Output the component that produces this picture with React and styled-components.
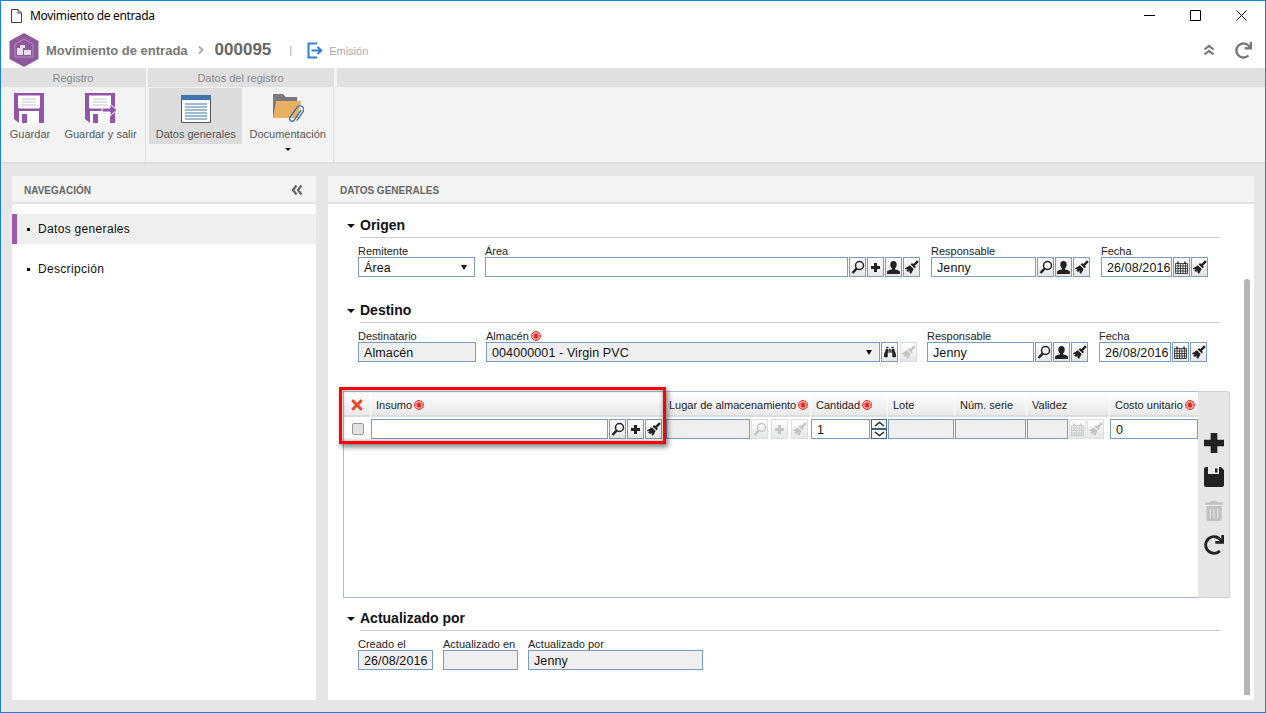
import React from "react";
import styled, { createGlobalStyle } from "styled-components";
import { FaBinoculars, FaRedo, FaTimes, FaTrashAlt } from "react-icons/fa";

const GlobalStyle = createGlobalStyle`
  html, body {
    margin: 0;
    padding: 0;
    background: #fff;
  }
  * {
    box-sizing: border-box;
  }
  body {
    font-family: "Liberation Sans", Arial, sans-serif;
    color: #111;
  }
`;

const Window = styled.div`
  width: 1266px;
  height: 713px;
  border: 1px solid #1883d7;
  display: flex;
  flex-direction: column;
  overflow: hidden;
  background: #e6e6e6;
`;

const TitleBar = styled.div`
  height: 29px;
  flex: none;
  background: #fff;
  display: flex;
  align-items: center;
  padding-left: 10px;
`;

const TitleText = styled.span`
  font-family: "Noto Sans", sans-serif;
  font-size: 12px;
  letter-spacing: -0.33px;
  color: #000;
  margin-left: 8px;
  flex: 1;
`;

const WinButton = styled.div`
  width: 46px;
  display: flex;
  justify-content: center;
  margin-right: ${(p) => p.$mr || 0}px;
`;

const HeaderBar = styled.div`
  height: 38px;
  flex: none;
  background: #fff;
  display: flex;
  align-items: center;
  padding: 2px 13px 0 8px;
`;

const Crumb = styled.span`
  font-size: 13px;
  font-weight: bold;
  color: #777;
  margin-left: 7px;
`;

const CrumbSep = styled.span`
  display: flex;
  margin: 0 11px 0 10px;
`;

const RecordNo = styled.span`
  font-size: 17px;
  font-weight: bold;
  color: #666;
`;

const Pipe = styled.span`
  margin: 0 15px 0 18px;
  color: #aaa;
  font-size: 11px;
`;

const StepText = styled.span`
  font-size: 11px;
  color: #aaa;
  margin-left: 6px;
  padding-top: 2px;
  flex: 1;
`;

const HeadAction = styled.div`
  color: #777;
  display: flex;
  font-size: 17px;
  margin-left: 20px;
`;

const Ribbon = styled.div`
  height: 96px;
  flex: none;
  display: flex;
  background: #f3f3f3;
  border-bottom: 2px solid #dedede;
`;

const RibbonGroup = styled.div`
  width: ${(p) => p.$w}px;
  flex: ${(p) => (p.$w ? "none" : 1)};
  margin-right: ${(p) => p.$gap || 0}px;
  border-right: ${(p) => (p.$w ? "1px solid #e0e0e0" : "none")};
  display: flex;
  flex-direction: column;
`;

const GroupTitle = styled.div`
  height: 19px;
  background: #e0e0e0;
  font-size: 11px;
  color: #888;
  display: flex;
  align-items: center;
  justify-content: center;
`;

const GroupBody = styled.div`
  display: flex;
  padding: 1px 0 0 ${(p) => p.$pad || 0}px;
`;

const RibbonButton = styled.div`
  width: ${(p) => p.$w}px;
  height: 56px;
  display: flex;
  flex-direction: column;
  align-items: center;
  padding-top: 5px;
  background: ${(p) => (p.$active ? "#dcdcdc" : "transparent")};
  position: relative;
`;

const RibbonLabel = styled.span`
  font-size: 11px;
  color: #555;
  margin-top: 5px;
  white-space: nowrap;
`;

const DropCaret = styled.span`
  position: absolute;
  left: 50%;
  bottom: -7px;
  margin-left: -3px;
  border-left: 3px solid transparent;
  border-right: 3px solid transparent;
  border-top: 3px solid #111;
`;

const Main = styled.div`
  flex: 1;
  min-height: 0;
  display: flex;
  gap: 12px;
  padding: 12px 11px;
`;

const Panel = styled.div`
  width: ${(p) => p.$w}px;
  flex: none;
  background: #fff;
  border-radius: 3px 3px 0 0;
  position: relative;
  display: flex;
  flex-direction: column;
`;

const PanelHead = styled.div`
  height: 28px;
  flex: none;
  background: #f4f4f4;
  border-bottom: 2px solid #e2e2e2;
  border-radius: 3px 3px 0 0;
  display: flex;
  align-items: center;
  justify-content: space-between;
  padding: 2px 13px 0 12px;
  font-size: 10px;
  font-weight: bold;
  color: #666;
`;

const NavList = styled.div`
  padding-top: 10px;
  display: flex;
  flex-direction: column;
  gap: 10px;
`;

const NavItem = styled.div`
  height: 30px;
  display: flex;
  align-items: center;
  padding-left: ${(p) => (p.$active ? 10 : 15)}px;
  border-left: ${(p) => (p.$active ? "5px solid #9a5ab0" : "none")};
  background: ${(p) => (p.$active ? "#efefef" : "transparent")};
  font-size: 12px;
  letter-spacing: 0.32px;
  color: #111;
  &::before {
    content: "";
    width: 3px;
    height: 3px;
    background: #111;
    margin-right: 8px;
  }
`;

const Body = styled.div`
  padding-top: 14px;
`;

const ScrollThumb = styled.div`
  position: absolute;
  right: 4px;
  top: 103px;
  width: 6px;
  height: 416px;
  border-radius: 3px 3px 0 0;
  background: #b5b5b5;
`;

const Section = styled.div`
  padding-left: 19px;
  margin-top: ${(p) => p.$mt || 0}px;
`;

const SectionHead = styled.div`
  display: flex;
  align-items: center;
  gap: 5px;
  margin-right: 34px;
`;

const SectionCaret = styled.span`
  width: 0;
  flex: none;
  border-left: 4px solid transparent;
  border-right: 4px solid transparent;
  border-top: 4px solid #111;
  margin-bottom: 5px;
`;

const SectionTitle = styled.div`
  flex: 1;
  height: 20px;
  font-size: 14px;
  line-height: 15px;
  font-weight: bold;
  color: #111;
  border-bottom: 1px solid #ccc;
`;

const FieldRow = styled.div`
  display: flex;
  padding: 7px 0 0 11px;
`;

const Field = styled.div`
  margin-left: ${(p) => p.$ml || 0}px;
  display: flex;
  flex-direction: column;
`;

const Label = styled.div`
  height: 12px;
  font-size: 11px;
  line-height: 12px;
  color: #222;
  display: flex;
  align-items: center;
  gap: 2px;
  white-space: nowrap;
`;

const Controls = styled.div`
  display: flex;
  gap: ${(p) => p.$gap ?? 1}px;
  width: ${(p) => (p.$w ? `${p.$w}px` : "auto")};
  flex: none;
`;

const Box = styled.div`
  width: ${(p) => p.$w}px;
  height: 20px;
  flex: none;
  border: 1px solid #7c9cbd;
  background: ${(p) => (p.$off ? "#efefef" : "#fff")};
  font-size: 12.5px;
  letter-spacing: 0.1px;
  color: #111;
  display: flex;
  align-items: center;
  justify-content: space-between;
  padding: 1px 5px 0;
  white-space: nowrap;
  overflow: hidden;
`;

const BoxCaret = styled.span`
  border-left: 3px solid transparent;
  border-right: 3px solid transparent;
  border-top: 5px solid #111;
  margin-right: 2px;
`;

const IconButton = styled.div`
  width: 17px;
  height: 20px;
  flex: none;
  border: 1px solid ${(p) => (p.$off ? "#d6dfe9" : "#7c9cbd")};
  background: linear-gradient(#fff, #e6e6e6);
  color: ${(p) => (p.$off ? "#c4c4c4" : "#222")};
  display: flex;
  align-items: center;
  justify-content: center;
  font-size: 12px;
`;

const GridWrap = styled.div`
  margin: 29px 0 0 15px;
  width: 887px;
  height: 207px;
  display: flex;
  position: relative;
`;

const GridMain = styled.div`
  flex: 1;
  border: 1px solid #a3bddb;
  border-right: none;
  background: #fff;
`;

const GridRow = styled.div`
  display: flex;
  gap: 1px;
  height: ${(p) => p.$h}px;
  align-items: ${(p) => (p.$head ? "stretch" : "flex-start")};
  padding-top: ${(p) => p.$pt || 0}px;
`;

const HeadCell = styled.div`
  width: ${(p) => p.$w}px;
  flex: none;
  background: linear-gradient(#fff, #e9e9e9);
  border-bottom: 2px solid #dcdcdc;
  font-size: 11px;
  color: #222;
  display: flex;
  align-items: center;
  gap: 2px;
  padding: 2px 0 0 ${(p) => p.$pad ?? 5}px;
  justify-content: ${(p) => (p.$center ? "center" : "flex-start")};
  white-space: nowrap;
`;

const CheckCell = styled.div`
  width: 26px;
  height: 20px;
  flex: none;
  display: flex;
  align-items: center;
  justify-content: center;
  padding-left: 2px;
`;

const CheckBox = styled.div`
  width: 12px;
  height: 12px;
  border: 1px solid #999;
  border-radius: 2px;
  background: #e2e2e2;
`;

const Spinner = styled.div`
  width: 16px;
  height: 20px;
  flex: none;
  display: flex;
  flex-direction: column;
`;

const SpinPart = styled.div`
  flex: 1;
  border: 1px solid #3f6288;
  background: #fff;
  display: flex;
  align-items: center;
  justify-content: center;
`;

const GridTools = styled.div`
  width: 32px;
  flex: none;
  background: #e6e6e6;
  border: 1px solid #d0d0d0;
  border-left: none;
  border-radius: 0 3px 0 0;
  display: flex;
  flex-direction: column;
  align-items: center;
  padding-top: 41px;
  gap: 14px;
`;

const ToolIcon = styled.div`
  height: 20px;
  display: flex;
  align-items: center;
  font-size: 20px;
  color: ${(p) => (p.$off ? "#c0c0c0" : "#222")};
`;

const Highlight = styled.div`
  position: absolute;
  left: -4px;
  top: -4px;
  width: 327px;
  height: 57px;
  border: 3px solid #f00;
  box-shadow: 2px 3px 5px rgba(0, 0, 0, 0.5), inset 0 0 4px rgba(0, 0, 0, 0.4);
  pointer-events: none;
`;

const Required = () => (
  <svg width="10" height="10" viewBox="0 0 10 10">
    <circle cx="5" cy="5" r="4.5" fill="#fbd5d3" stroke="#e0201c" strokeWidth="0.9" />
    <path d="M2.6 2.6l4.8 4.8M7.4 2.6l-4.8 4.8M5 1.2v7.600M1.2 5h7.600" stroke="#e0201c" strokeWidth="1.1" />
  </svg>
);

const SearchIcon = () => (
  <svg width="14" height="14" viewBox="0 0 14 14">
    <circle cx="8.500" cy="5.500" r="4" fill="none" stroke="currentColor" strokeWidth="1.500" />
    <path d="M5.800 8.400L1.500 13" stroke="currentColor" strokeWidth="2.400" />
  </svg>
);

const UserIcon = () => (
  <svg width="15" height="15" viewBox="0 0 14 14">
    <path
      fill="currentColor"
      d="M7 1c2 0 3 1.400 3 3.300 0 1.500-.6 2.800-1.500 3.400v1c0 .5 4.500.9 4.500 2.300V13H1v-2c0-1.400 4.500-1.800 4.500-2.300v-1C4.600 7.100 4 5.800 4 4.300 4 2.400 5 1 7 1z"
    />
  </svg>
);

const CalendarIcon = () => (
  <svg width="13" height="13" viewBox="0 0 13 13">
    <path
      fill="none"
      stroke="currentColor"
      strokeWidth="0.800"
      d="M.5 2.500h12v10H.5zM.5 5h12M.5 7.500h12M.5 10h12M3 2.500v10M5.500 2.500v10M8 2.500v10M10.500 2.500v10"
    />
    <path d="M3 .5v2.500M10 .5v2.500" stroke="currentColor" strokeWidth="1.400" />
  </svg>
);

const BrushIcon = () => (
  <svg width="15" height="15" viewBox="0 0 14 14">
    <path d="M13 1L9 5" stroke="currentColor" strokeWidth="2.200" />
    <path d="M7.500 2.800l3.700 3.700-1.300 1.300-3.700-3.700z" fill="currentColor" />
    <path fill="currentColor" d="M5.500 5l3.500 3.500L6.500 13 5 11.500l.5-1.500-1.800 1.200L2 9.500l1.500-1-2 .2L.8 8z" />
  </svg>
);

const PlusIcon = ({ size = 9 }) => (
  <svg width={size} height={size} viewBox="0 0 9 9">
    <path d="M4.500 0v9M0 4.500h9" stroke="currentColor" strokeWidth="3" />
  </svg>
);

const FloppyGlyph = () => (
  <svg width="20" height="20" viewBox="0 0 20 20">
    <path
      fill="currentColor"
      fillRule="evenodd"
      d="M2 0h15l3 3v15a2 2 0 0 1-2 2H2a2 2 0 0 1-2-2V2a2 2 0 0 1 2-2zM4 0v7h11V0zM11 1.500h2.500v4H11z"
    />
  </svg>
);

const DoubleChevron = ({ dir }) => (
  <svg width="12" height="12" viewBox="0 0 12 12">
    <path
      fill="none"
      stroke="currentColor"
      strokeWidth="2.200"
      d={
        dir === "up"
          ? "M1.500 5.500L6 2l4.500 3.500M1.500 10.500L6 7l4.500 3.500"
          : "M5.500 1.500L2 6l3.500 4.500M10.500 1.500L7 6l3.500 4.500"
      }
    />
  </svg>
);

const CrumbChevron = () => (
  <svg width="6" height="8" viewBox="0 0 6 8">
    <path d="M1 .5L4.500 4 1 7.500" fill="none" stroke="#aaa" strokeWidth="1.800" />
  </svg>
);

const Chevron = ({ up }) => (
  <svg width="11" height="6" viewBox="0 0 11 6">
    <path d={up ? "M1 5l4.500-3.500L10 5" : "M1 1l4.500 3.500L10 1"} fill="none" stroke="#222" strokeWidth="1.400" />
  </svg>
);

const DocIcon = () => (
  <svg width="11" height="14" viewBox="0 0 11 14">
    <path d="M.5.5H7l3.500 3.500v9.500H.5zM7 .5V4h3.500" fill="#fff" stroke="#444" strokeWidth="1" />
  </svg>
);

const HexLogo = () => (
  <svg width="30" height="34" viewBox="0 0 30 34">
    <path d="M15 0l14.500 8v18L15 34 .5 26V8z" fill="#8f5a9c" />
    <path d="M15 6l9 5v13H6V11z" fill="none" stroke="#b58ebf" strokeWidth="1" />
    <path d="M8 15h6v7H8zM15 17h7v5h-7zM11 12h5v3h-5z" fill="#e9dced" />
  </svg>
);

const EmitIcon = () => (
  <svg width="16" height="17" viewBox="0 0 16 17">
    <path d="M10 1.500H1.500v14H10" fill="none" stroke="#2f7fd0" strokeWidth="2" />
    <path d="M4.500 8.500H14M10.500 5l3.800 3.500-3.800 3.500" fill="none" stroke="#2f7fd0" strokeWidth="2" />
  </svg>
);

const FloppyIcon = ({ exit }) => (
  <svg width="32" height="30" viewBox="0 0 32 30">
    <path d="M0 0h30v30H5l-5-4z" fill="#9254aa" />
    <path d="M4 2.500h22V14a1.500 1.500 0 0 1-1.500 1.500h-19A1.500 1.500 0 0 1 4 14z" fill="#fff" />
    <path d="M8 6h14M8 9h14M8 12h14" stroke="#c9c0cc" strokeWidth="1" />
    <path d="M5 18h20v12H5z" fill="#fff" />
    <path d="M8 21h5v9H8z" fill="#9254aa" />
    {exit && <path d="M17 15h8v-4l7 6-7 6v-4h-8z" fill="#9254aa" stroke="#fff" strokeWidth="1" />}
  </svg>
);

const FormIcon = () => (
  <svg width="30" height="30" viewBox="0 0 30 30">
    <path d="M.5 2.500h29v27H.5z" fill="#fff" stroke="#555" />
    <path d="M0 2h30v5H0z" fill="#3f74ad" />
    <path
      d="M4 11h22M4 14h22M4 17h22M4 20h22M4 23h22M4 26h22"
      stroke="#3f74ad"
      strokeWidth="1"
    />
  </svg>
);

const FolderIcon = () => (
  <svg width="32" height="30" viewBox="0 0 32 30">
    <path d="M1 1h10l3 3h11v21H1z" fill="#7a7a7a" />
    <path d="M4 8h25l-3 17H1z" fill="#e8b060" />
    <g transform="translate(24 21) rotate(35)">
      <path
        d="M2 -6V6a2.500 2.500 0 0 1-5 0V-6a3.700 3.700 0 0 1 7.400 0V5"
        fill="none"
        stroke="#2f6db0"
        strokeWidth="1.300"
      />
    </g>
  </svg>
);

const Lookup = ({ off, gap, user, plus = true }) => (
  <Controls $gap={gap}>
    <IconButton $off={off}><SearchIcon /></IconButton>
    {plus && <IconButton $off={off}><PlusIcon /></IconButton>}
    {user && <IconButton $off={off}><UserIcon /></IconButton>}
    <IconButton $off={off}><BrushIcon /></IconButton>
  </Controls>
);

const DateTools = ({ off, gap }) => (
  <Controls $gap={gap}>
    <IconButton $off={off}><CalendarIcon /></IconButton>
    <IconButton $off={off}><BrushIcon /></IconButton>
  </Controls>
);

const App = () => {
  return (
    <Window>
      <GlobalStyle />
      <TitleBar>
        <DocIcon />
        <TitleText>Movimiento de entrada</TitleText>
        <WinButton>
          <svg width="11" height="11" viewBox="0 0 11 11"><path d="M0 5.500h11" stroke="#000" /></svg>
        </WinButton>
        <WinButton>
          <svg width="11" height="11" viewBox="0 0 11 11"><path d="M.5.5h10v10H.5z" fill="none" stroke="#000" /></svg>
        </WinButton>
        <WinButton $mr={1}>
          <svg width="11" height="11" viewBox="0 0 11 11"><path d="M.5.5l10 10M10.500.5l-10 10" stroke="#000" /></svg>
        </WinButton>
      </TitleBar>

      <HeaderBar>
        <HexLogo />
        <Crumb>Movimiento de entrada</Crumb>
        <CrumbSep><CrumbChevron /></CrumbSep>
        <RecordNo>000095</RecordNo>
        <Pipe>|</Pipe>
        <EmitIcon />
        <StepText>Emisión</StepText>
        <HeadAction><DoubleChevron dir="up" /></HeadAction>
        <HeadAction><FaRedo /></HeadAction>
      </HeaderBar>

      <Ribbon>
        <RibbonGroup $w={145} $gap={2}>
          <GroupTitle>Registro</GroupTitle>
          <GroupBody $pad={1}>
            <RibbonButton $w={56}>
              <FloppyIcon />
              <RibbonLabel>Guardar</RibbonLabel>
            </RibbonButton>
            <RibbonButton $w={85}>
              <FloppyIcon exit />
              <RibbonLabel>Guardar y salir</RibbonLabel>
            </RibbonButton>
          </GroupBody>
        </RibbonGroup>
        <RibbonGroup $w={186} $gap={3}>
          <GroupTitle>Datos del registro</GroupTitle>
          <GroupBody $pad={1}>
            <RibbonButton $w={94} $active>
              <FormIcon />
              <RibbonLabel>Datos generales</RibbonLabel>
            </RibbonButton>
            <RibbonButton $w={91}>
              <FolderIcon />
              <RibbonLabel>Documentación</RibbonLabel>
              <DropCaret />
            </RibbonButton>
          </GroupBody>
        </RibbonGroup>
        <RibbonGroup>
          <GroupTitle />
        </RibbonGroup>
      </Ribbon>

      <Main>
        <Panel $w={304}>
          <PanelHead>
            NAVEGACIÓN
            <DoubleChevron dir="left" />
          </PanelHead>
          <NavList>
            <NavItem $active>Datos generales</NavItem>
            <NavItem>Descripción</NavItem>
          </NavList>
        </Panel>

        <Panel $w={926}>
          <PanelHead>DATOS GENERALES</PanelHead>
          <ScrollThumb />
          <Body>
            <Section>
              <SectionHead>
                <SectionCaret />
                <SectionTitle>Origen</SectionTitle>
              </SectionHead>
              <FieldRow>
                <Field>
                  <Label>Remitente</Label>
                  <Box $w={117}>Área<BoxCaret /></Box>
                </Field>
                <Field $ml={10}>
                  <Label>Área</Label>
                  <Controls>
                    <Box $w={363} />
                    <Lookup user />
                  </Controls>
                </Field>
                <Field $ml={11}>
                  <Label>Responsable</Label>
                  <Controls>
                    <Box $w={105}>Jenny</Box>
                    <Lookup user plus={false} />
                  </Controls>
                </Field>
                <Field $ml={11}>
                  <Label>Fecha</Label>
                  <Controls>
                    <Box $w={71}>26/08/2016</Box>
                    <DateTools />
                  </Controls>
                </Field>
              </FieldRow>
            </Section>

            <Section $mt={26}>
              <SectionHead>
                <SectionCaret />
                <SectionTitle>Destino</SectionTitle>
              </SectionHead>
              <FieldRow>
                <Field>
                  <Label>Destinatario</Label>
                  <Box $w={118} $off>Almacén</Box>
                </Field>
                <Field $ml={10}>
                  <Label>Almacén <Required /></Label>
                  <Controls>
                    <Box $w={394} $off>004000001 - Virgin PVC<BoxCaret /></Box>
                    <Controls $gap={2}>
                      <IconButton><FaBinoculars /></IconButton>
                      <IconButton $off><BrushIcon /></IconButton>
                    </Controls>
                  </Controls>
                </Field>
                <Field $ml={10}>
                  <Label>Responsable</Label>
                  <Controls>
                    <Box $w={107}>Jenny</Box>
                    <Lookup user plus={false} />
                  </Controls>
                </Field>
                <Field $ml={11}>
                  <Label>Fecha</Label>
                  <Controls>
                    <Box $w={72}>26/08/2016</Box>
                    <DateTools />
                  </Controls>
                </Field>
              </FieldRow>
            </Section>

            <GridWrap>
              <GridMain>
                <GridRow $h={25} $head>
                  <HeadCell $w={26} $pad={0} $center><FaTimes color="#e8452a" size={16} /></HeadCell>
                  <HeadCell $w={294}>Insumo <Required /></HeadCell>
                  <HeadCell $w={144} $pad={3}>Lugar de almacenamiento <Required /></HeadCell>
                  <HeadCell $w={76}>Cantidad <Required /></HeadCell>
                  <HeadCell $w={66}>Lote</HeadCell>
                  <HeadCell $w={71}>Núm. serie</HeadCell>
                  <HeadCell $w={82}>Validez</HeadCell>
                  <HeadCell $w={88}>Costo unitario <Required /></HeadCell>
                </GridRow>
                <GridRow $h={30} $pt={2}>
                  <CheckCell><CheckBox /></CheckCell>
                  <Controls $w={294}>
                    <Box $w={237} />
                    <Lookup />
                  </Controls>
                  <Controls $w={144}>
                    <Box $w={84} $off />
                    <Lookup off gap={3} />
                  </Controls>
                  <Controls $w={76}>
                    <Box $w={59}>1</Box>
                    <Spinner>
                      <SpinPart><Chevron up /></SpinPart>
                      <SpinPart><Chevron /></SpinPart>
                    </Spinner>
                  </Controls>
                  <Box $w={66} $off />
                  <Box $w={71} $off />
                  <Controls $w={82}>
                    <Box $w={41} $off />
                    <DateTools off />
                  </Controls>
                  <Box $w={88}>0</Box>
                </GridRow>
              </GridMain>
              <GridTools>
                <ToolIcon><PlusIcon size={20} /></ToolIcon>
                <ToolIcon><FloppyGlyph /></ToolIcon>
                <ToolIcon $off><FaTrashAlt /></ToolIcon>
                <ToolIcon><FaRedo /></ToolIcon>
              </GridTools>
              <Highlight />
            </GridWrap>

            <Section $mt={13}>
              <SectionHead>
                <SectionCaret />
                <SectionTitle>Actualizado por</SectionTitle>
              </SectionHead>
              <FieldRow>
                <Field>
                  <Label>Creado el</Label>
                  <Box $w={75} $off>26/08/2016</Box>
                </Field>
                <Field $ml={10}>
                  <Label>Actualizado en</Label>
                  <Box $w={75} $off />
                </Field>
                <Field $ml={10}>
                  <Label>Actualizado por</Label>
                  <Box $w={175} $off>Jenny</Box>
                </Field>
              </FieldRow>
            </Section>
          </Body>
        </Panel>
      </Main>
    </Window>
  );
};

export default App;
